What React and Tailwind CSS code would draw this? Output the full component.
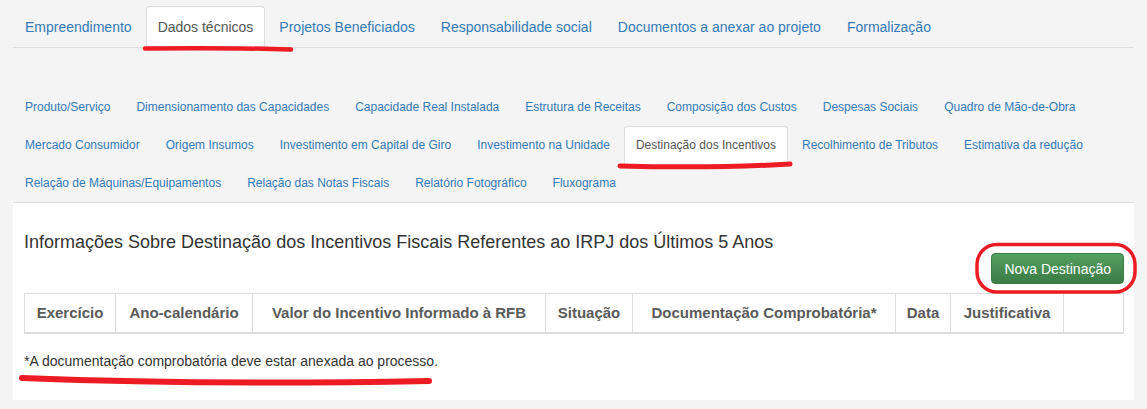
const mainTabs = [
  'Empreendimento',
  'Dados técnicos',
  'Projetos Beneficiados',
  'Responsabilidade social',
  'Documentos a anexar ao projeto',
  'Formalização',
]

const subTabs = [
  'Produto/Serviço',
  'Dimensionamento das Capacidades',
  'Capacidade Real Instalada',
  'Estrutura de Receitas',
  'Composição dos Custos',
  'Despesas Sociais',
  'Quadro de Mão-de-Obra',
  'Mercado Consumidor',
  'Origem Insumos',
  'Investimento em Capital de Giro',
  'Investimento na Unidade',
  'Destinação dos Incentivos',
  'Recolhimento de Tributos',
  'Estimativa da redução',
  'Relação de Máquinas/Equipamentos',
  'Relação das Notas Fiscais',
  'Relatório Fotográfico',
  'Fluxograma',
]

const columns = [
  { label: 'Exercício', w: 'w-[91px]' },
  { label: 'Ano-calendário', w: 'w-[137px]' },
  { label: 'Valor do Incentivo Informado à RFB', w: 'w-[293px]' },
  { label: 'Situação', w: 'w-[87px]' },
  { label: 'Documentação Comprobatória*', w: 'w-[263px]' },
  { label: 'Data', w: 'w-[55px]' },
  { label: 'Justificativa', w: 'w-[113px]' },
  { label: '', w: 'w-[60px]' },
]

function Tab({ label, active, small }) {
  const size = small ? 'text-[12px] leading-[17px]' : 'text-[14px] leading-5'
  return (
    <li className="-mb-px mr-[2px]">
      <a
        href="#"
        className={
          'block px-[11px] py-[10px] border rounded-t-[4px] ' +
          size +
          (active
            ? ' bg-white border-[#ddd] border-b-transparent text-[#555]'
            : ' border-transparent text-[#337ab7]')
        }
      >
        {label}
      </a>
    </li>
  )
}

function Marks() {
  return (
    <svg
      className="absolute inset-0 pointer-events-none"
      width="1147"
      height="409"
      viewBox="0 0 1147 409"
      fill="none"
      stroke="#ed1c24"
      strokeLinecap="round"
    >
      <path d="M145 48.5 C190 48 250 48.2 291 49.5" strokeWidth="4.5" />
      <path d="M620 166 C680 167.5 740 167 790 164" strokeWidth="5" />
      <rect x="977" y="244.5" width="158" height="47.5" rx="20" strokeWidth="3.5" />
      <path d="M22 378 C150 383 300 383.5 429 381" strokeWidth="6" />
    </svg>
  )
}

export default function App() {
  return (
    <div
      className="relative w-full h-[409px] overflow-hidden bg-[#f4f4f4]"
      style={{ fontFamily: '"Liberation Sans", Arial, sans-serif' }}
    >
      <div className="px-[13px] pt-[6px]">
        <ul className="flex border-b border-[#ddd]">
          {mainTabs.map((t) => (
            <Tab key={t} label={t} active={t === 'Dados técnicos'} />
          ))}
        </ul>

        <ul className="mt-[40px] flex flex-wrap border-b border-[#ddd]">
          {subTabs.map((t) => (
            <Tab key={t} label={t} small active={t === 'Destinação dos Incentivos'} />
          ))}
        </ul>

        <div className="bg-white px-[11px] pt-[29px] pb-[29px]">
          <h3 className="text-[18px] leading-5 text-[#333]">
            Informações Sobre Destinação dos Incentivos Fiscais Referentes ao IRPJ dos Últimos 5 Anos
          </h3>
          <div className="flex justify-end -mr-[1px] mt-[1px]">
            <button className="h-[31px] px-[12px] rounded-[4px] border border-[#3a7a44] bg-gradient-to-b from-[#55a060] to-[#3a7c45] text-white text-[14px] leading-5">
              Nova Destinação
            </button>
          </div>
          <table className="mt-[9px] w-full table-fixed border-collapse border border-[#ddd]">
            <thead>
              <tr>
                {columns.map((c, i) => (
                  <th
                    key={i}
                    className={
                      c.w +
                      ' border border-[#ddd] border-b-2 py-[10px] text-center text-[15px] leading-[18px] font-bold text-[#5a5a5a]'
                    }
                  >
                    {c.label}
                  </th>
                ))}
              </tr>
            </thead>
          </table>
          <p className="mt-[17px] text-[14px] leading-5 text-[#333]">
            *A documentação comprobatória deve estar anexada ao processo.
          </p>
        </div>
      </div>
      <Marks />
    </div>
  )
}
